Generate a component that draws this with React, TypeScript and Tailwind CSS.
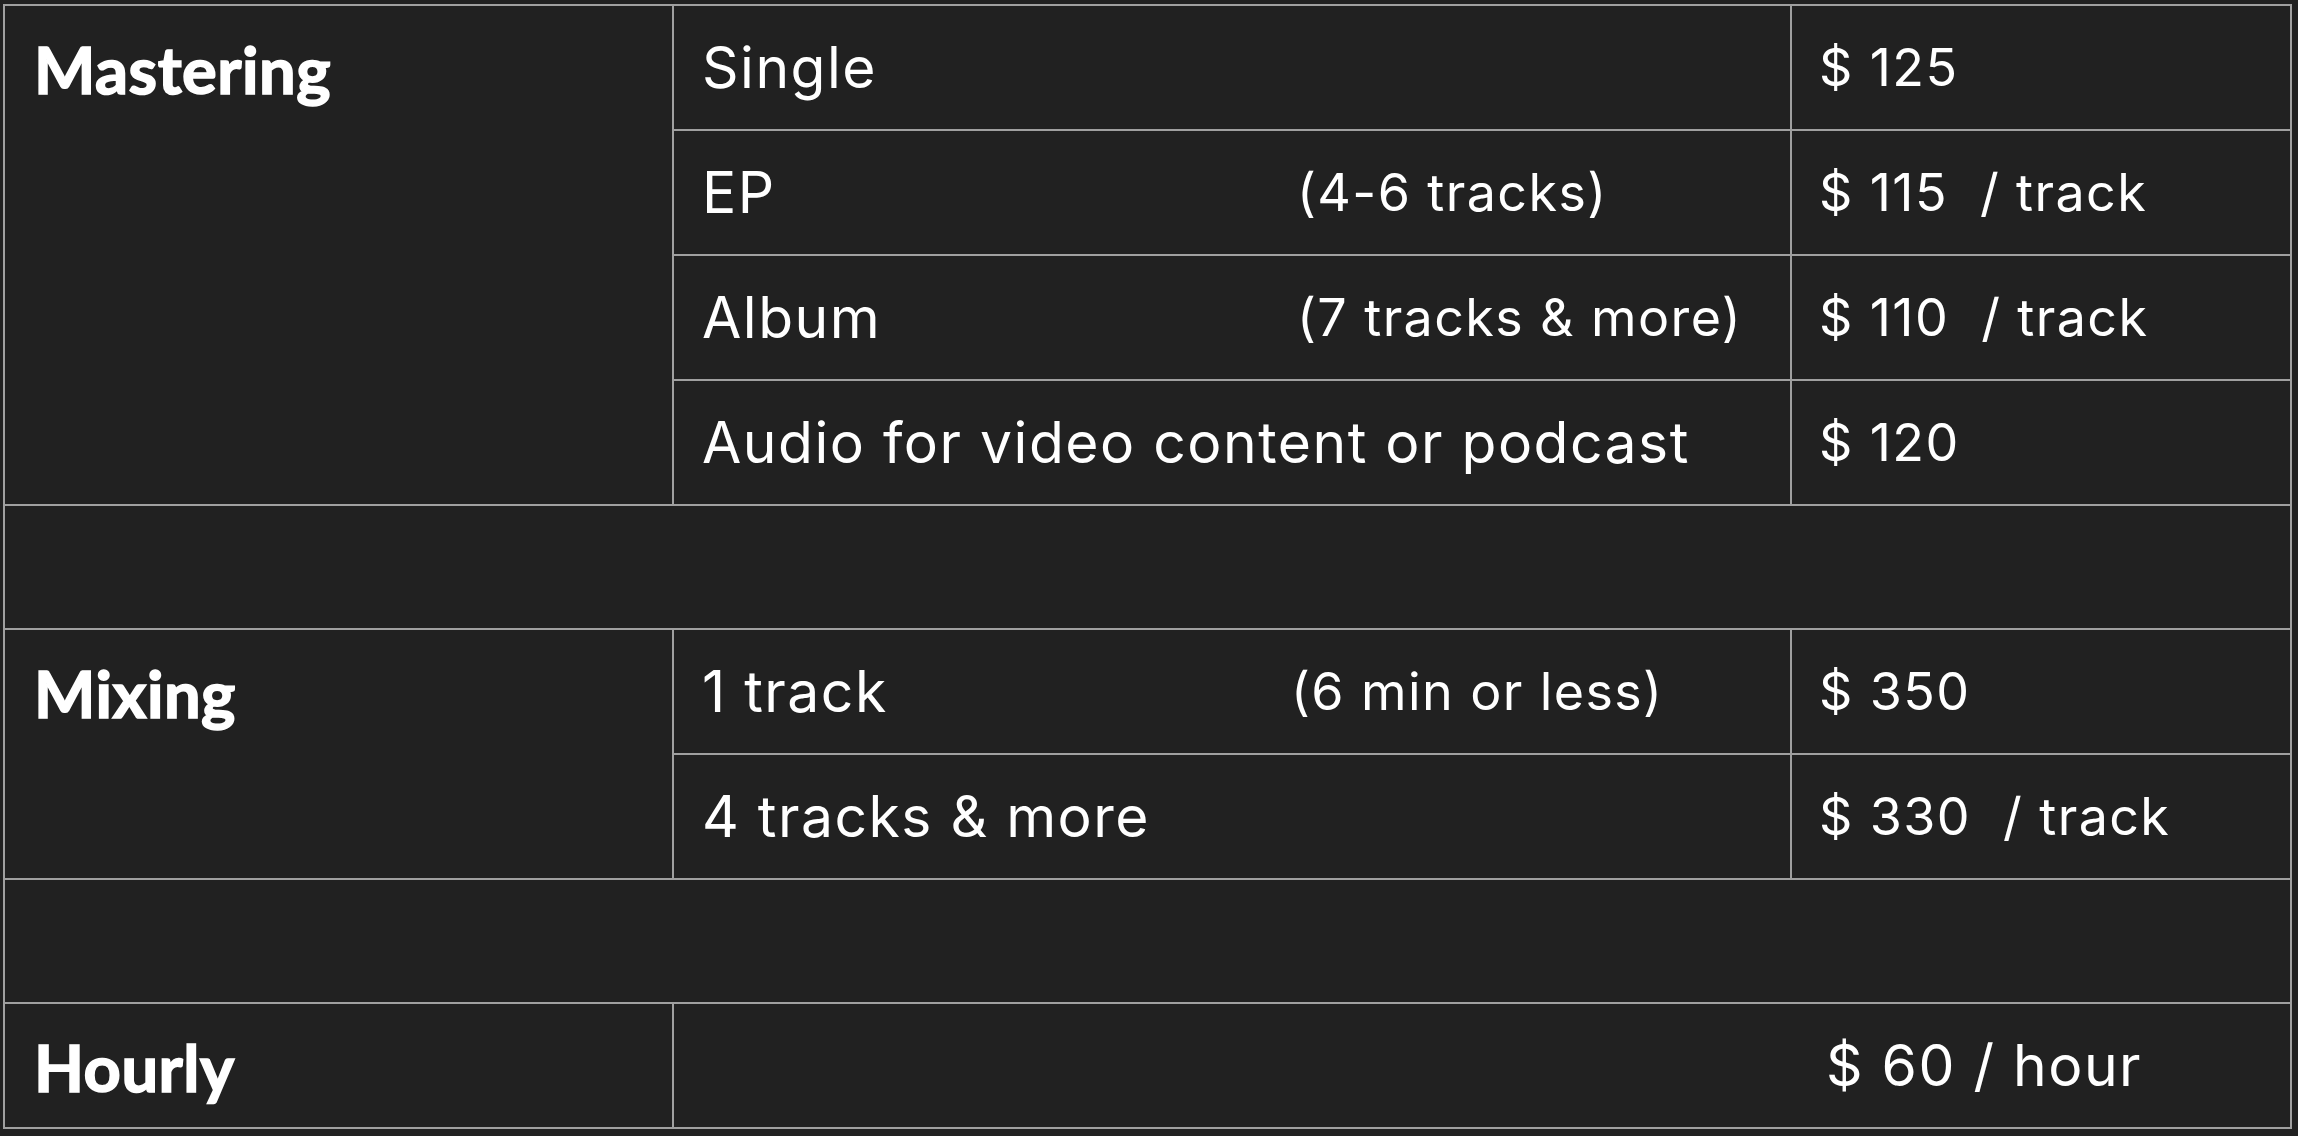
import React from "react";

const body = "font-['Inter',sans-serif] text-[57px] tracking-[1.5px] text-white leading-none whitespace-pre";
const small = "font-['Inter',sans-serif] text-[52px] tracking-[1.4px] text-white leading-none whitespace-pre";
const head = "font-['Lato',sans-serif] font-bold text-[65px] tracking-[0.5px] text-white leading-none [-webkit-text-stroke:1.6px_white]";

function Cell({ children, className = "" }: { children?: React.ReactNode; className?: string }) {
  return <div className={`bg-[#212121] flex items-center ${className}`}>{children}</div>;
}

function HeadCell({ label, span }: { label: string; span: string }) {
  return (
    <div className={`bg-[#212121] flex items-start ${span}`}>
      <div className="h-[123px] flex items-center pl-[29px] pt-[3px]">
        <span className={head}>{label}</span>
      </div>
    </div>
  );
}

function Desc({ label, note, w }: { label: string; note?: string; w?: string }) {
  return (
    <Cell className="pl-[28px]">
      <span className={`${body} ${w ?? ""}`}>{label}</span>
      {note && <span className={small}>{note}</span>}
    </Cell>
  );
}

function Price({ children }: { children: React.ReactNode }) {
  return (
    <Cell className="pl-[27px]">
      <span className={small}>{children}</span>
    </Cell>
  );
}

export default function App() {
  return (
    <div className="min-h-screen w-full bg-[#212121] pt-[4px] pl-[3px]">
      <div className="w-[2289px] bg-[#a0a0a0] p-[2px] grid grid-cols-[667px_1116px_498px] grid-rows-[123px_123px_123px_123px_122px_123px_123px_122px_123px] gap-[2px]">
        <HeadCell label="Mastering" span="row-span-4" />
        <Desc label="Single" />
        <Price>$ 125</Price>
        <Desc label="EP" note="(4-6 tracks)" w="w-[595px]" />
        <Price>{"$ 115  / track"}</Price>
        <Desc label="Album" note="(7 tracks & more)" w="w-[595px]" />
        <Price>{"$ 110  / track"}</Price>
        <Desc label="Audio for video content or podcast" />
        <Price>$ 120</Price>

        <Cell className="col-span-3" />

        <HeadCell label="Mixing" span="row-span-2" />
        <Desc label="1 track" note="(6 min or less)" w="w-[589px]" />
        <Price>$ 350</Price>
        <Desc label="4 tracks & more" />
        <Price>{"$ 330  / track"}</Price>

        <Cell className="col-span-3" />

        <HeadCell label="Hourly" span="" />
        <Cell className="col-span-2 pl-[1152px]">
          <span className={body}>$ 60 / hour</span>
        </Cell>
      </div>
    </div>
  );
}
